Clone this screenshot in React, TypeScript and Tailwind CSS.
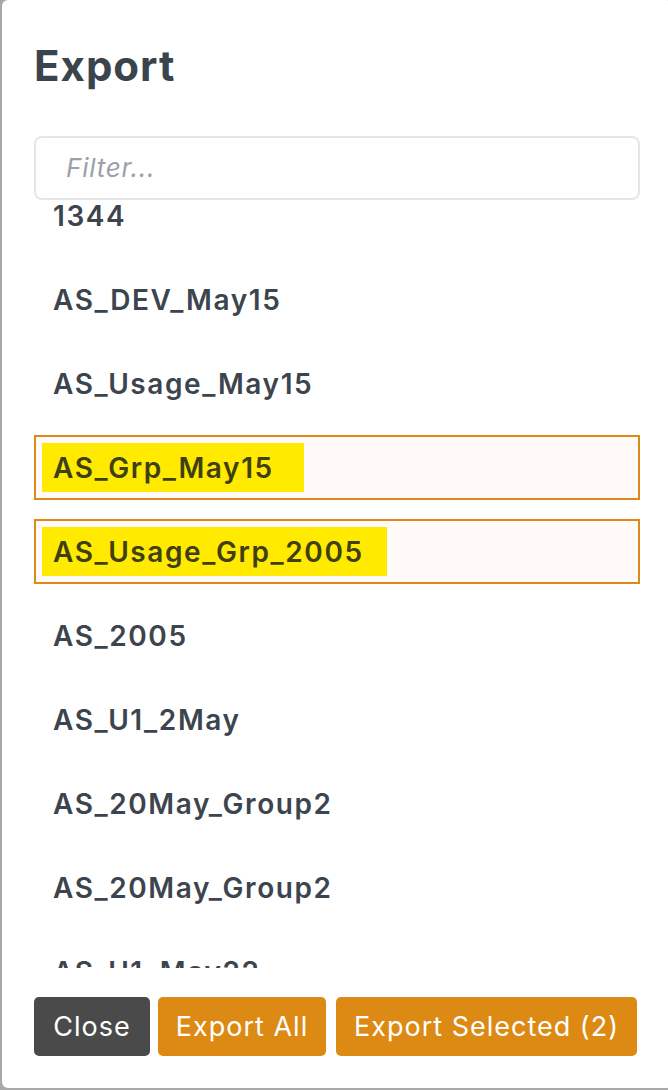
import React from "react";

// Export dialog — filterable list of groups with two selected rows.

const ROWS: { label: string; selected?: boolean; hl?: string }[] = [
  { label: "1344" },
  { label: "AS_DEV_May15" },
  { label: "AS_Usage_May15" },
  { label: "AS_Grp_May15", selected: true, hl: "w-[262px]" },
  { label: "AS_Usage_Grp_2005", selected: true, hl: "w-[345px]" },
  { label: "AS_2005" },
  { label: "AS_U1_2May" },
  { label: "AS_20May_Group2" },
  { label: "AS_20May_Group2" },
  { label: "AS_U1_May22" },
  { label: "AS_U1_May29" },
];

const FONT = "font-['Inter','Lato',sans-serif]";

function Row({ label, selected, hl }: (typeof ROWS)[number]) {
  if (selected) {
    return (
      <div className="h-[65px] mb-[19px] border-2 border-[#dc8a1c] bg-[#fffaf7] flex items-center pl-[6px]">
        <span
          className={`${hl} h-[49px] bg-[#ffea00] flex items-center pl-[11px] text-[28px] tracking-[1.6px] leading-none font-semibold text-[#3f4012] whitespace-nowrap`}
        >
          {label}
        </span>
      </div>
    );
  }
  return (
    <div className="h-[65px] mb-[19px] border-2 border-transparent flex items-center pl-[17px]">
      <span className="text-[28px] tracking-[1.6px] leading-none font-semibold text-[#3c454e] whitespace-nowrap">
        {label}
      </span>
    </div>
  );
}

export default function App() {
  return (
    <div className={`${FONT} h-[1090px] bg-[#a8a8a8] pl-[2px] overflow-hidden`}>
      <div className="w-[670px] h-[1088px] bg-white rounded-[6px] px-[32px] flex flex-col">
        <h1 className="pt-[38px] h-[136px] text-[42px] tracking-[1px] leading-[56px] font-bold text-[#3b444c]">
          Export
        </h1>

        <div className="h-[64px] border-2 border-[#e6e6e6] rounded-[8px] flex items-center pl-[30px]">
          <span className="text-[26px] tracking-[0.8px] leading-none italic text-[#9ca1a9]">
            Filter...
          </span>
        </div>

        <div className="h-[768px] overflow-hidden">
          <div className="-mt-[17px]">
            {ROWS.map((r, i) => (
              <Row key={i} {...r} />
            ))}
          </div>
        </div>

        <div className="pt-[29px] flex gap-[8px] text-[27px] tracking-[1px] leading-none text-white">
          <button className="h-[59px] w-[116px] rounded-[5px] bg-[#4a4a4a]">Close</button>
          <button className="h-[59px] w-[168px] rounded-[5px] bg-[#dd8a14]">Export All</button>
          <button className="ml-[2px] h-[59px] w-[301px] rounded-[5px] bg-[#dd8a14]">
            Export Selected (2)
          </button>
        </div>
      </div>
    </div>
  );
}
